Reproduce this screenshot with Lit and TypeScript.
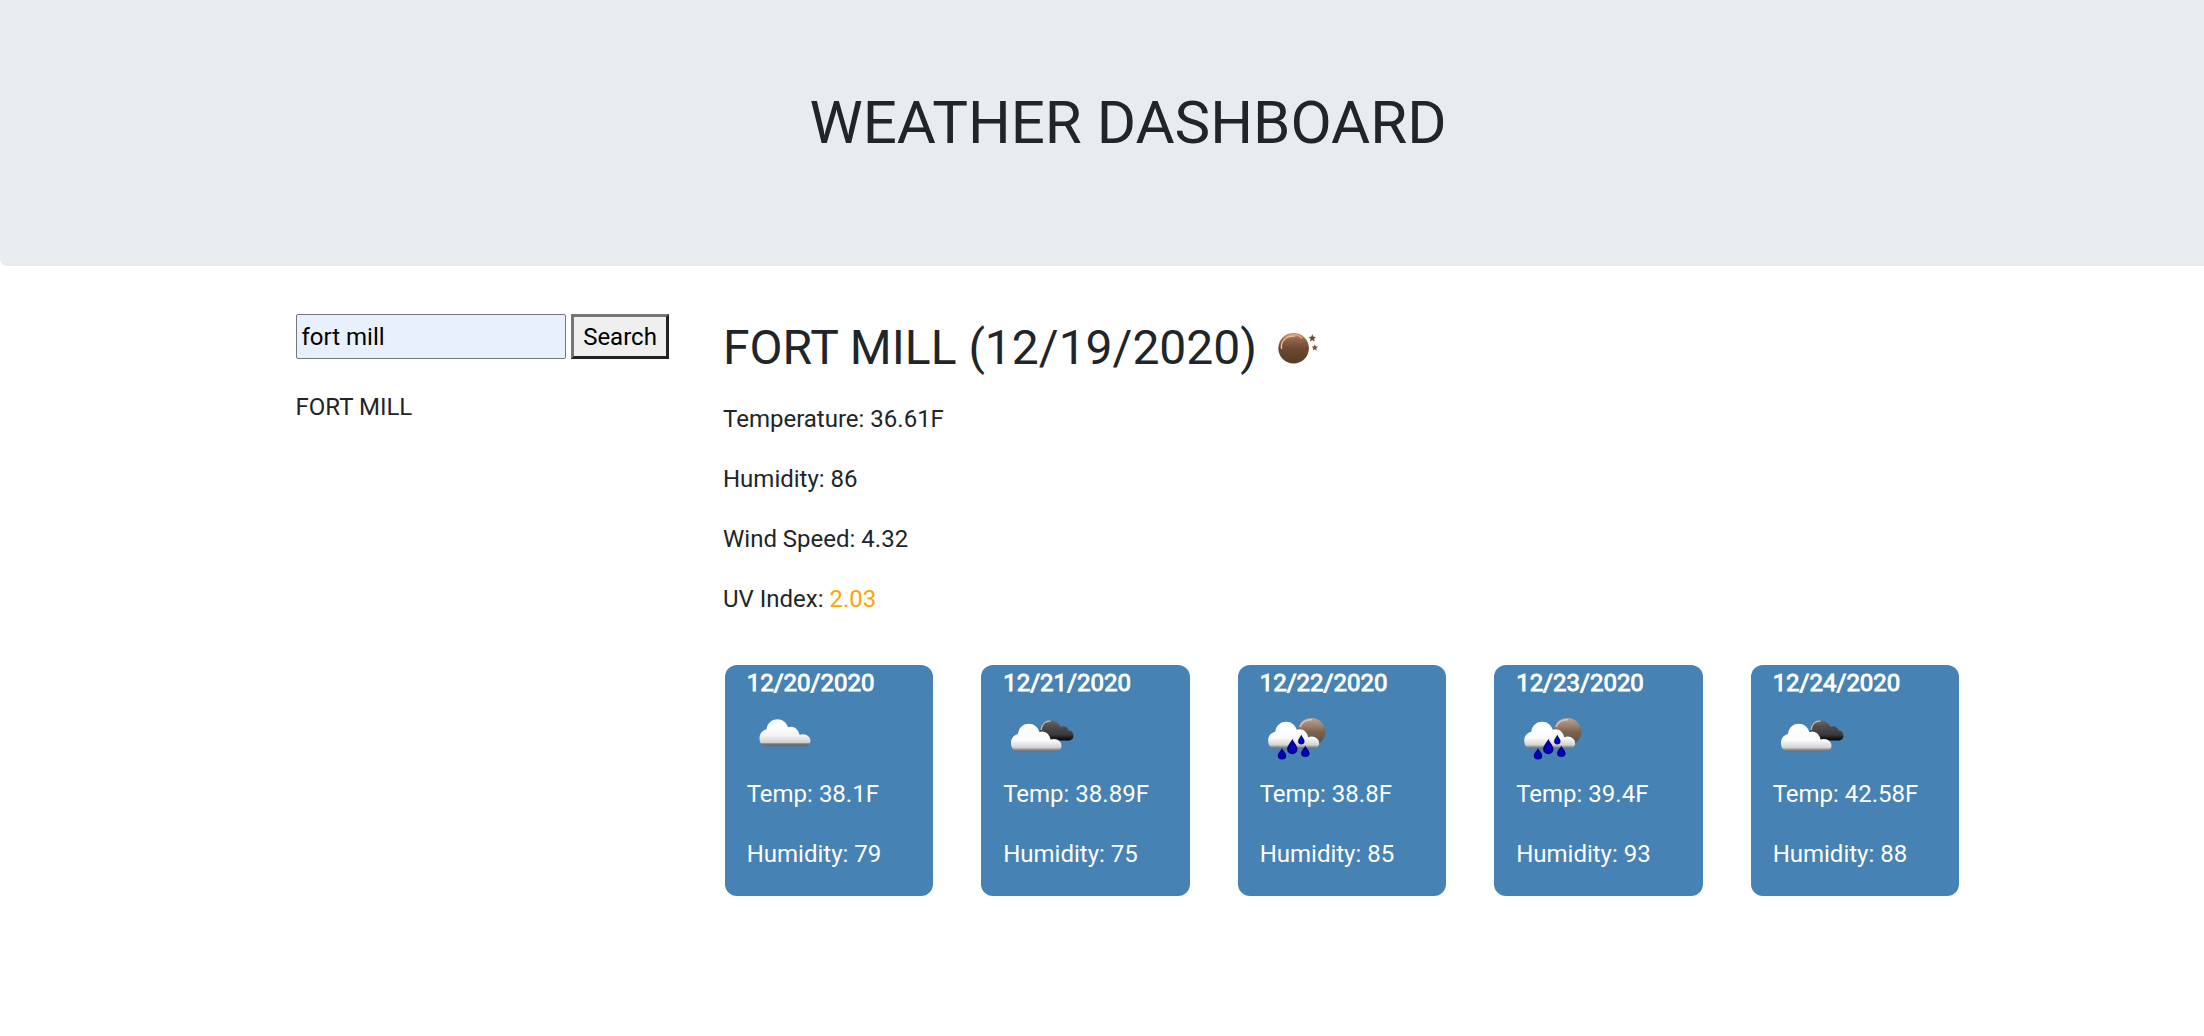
import { LitElement, html, svg, css } from "lit";
import { customElement, property } from "lit/decorators.js";

type IconName = "cloud" | "broken" | "rain" | "moon";

const CLOUD = "M7 27 C2 27 0 23 0 19 C0 14 3 11 7 10 C8 3 13 0 18 0 C23 0 27 3 28.500 8 C34 6 39 10 40 15.500 C46 13.500 51 17 51 21.500 C51 25 48 27 45 27 Z";
const DROP = "M0 -7.500 C1 -4 5 -1 5 3 A5 5 0 0 1 -5 3 C-5 -1 -1 -4 0 -7.500 Z";
const STAR = "M0 -3.400 L1 -1.100 L3.400 -1 L1.600 .7 L2.100 3.200 L0 1.900 L-2.100 3.200 L-1.600 .7 L-3.400 -1 L-1 -1.100 Z";

const gradients = svg`
  <linearGradient id="white" x1="0" y1="0" x2="0" y2="1">
    <stop offset="0" stop-color="#f4f4f4"/><stop offset=".25" stop-color="#fff"/>
    <stop offset=".6" stop-color="#f4f4f4"/><stop offset=".86" stop-color="#d0d0d0"/>
    <stop offset=".91" stop-color="#777"/><stop offset="1" stop-color="#666"/>
  </linearGradient>
  <linearGradient id="front" x1="0" y1="0" x2="0" y2="1">
    <stop offset="0" stop-color="#fff"/><stop offset=".6" stop-color="#fbfbfb"/>
    <stop offset=".86" stop-color="#d2d3d4"/><stop offset=".95" stop-color="#808488"/><stop offset="1" stop-color="#6c7074"/>
  </linearGradient>
  <linearGradient id="dark" x1="0" y1="0" x2="0" y2="1">
    <stop offset="0" stop-color="#6a6a6a"/><stop offset=".3" stop-color="#4e4e4e"/>
    <stop offset=".7" stop-color="#3a3a3a"/><stop offset="1" stop-color="#050505"/>
  </linearGradient>
  <linearGradient id="brown" x1="0" y1="0" x2="0" y2="1">
    <stop offset="0" stop-color="#c9916c"/><stop offset=".22" stop-color="#936344"/>
    <stop offset=".5" stop-color="#6c4a33"/><stop offset="1" stop-color="#573a26"/>
  </linearGradient>
  <linearGradient id="haze" x1="0" y1="0" x2="0" y2="1">
    <stop offset="0" stop-color="#b7a498"/><stop offset=".25" stop-color="#a08471"/>
    <stop offset=".5" stop-color="#7a6250"/><stop offset="1" stop-color="#5f4c41"/>
  </linearGradient>
  <radialGradient id="drop" cx=".5" cy=".6" r=".55">
    <stop offset="0" stop-color="#0505d8"/><stop offset=".5" stop-color="#0303ac"/><stop offset="1" stop-color="#020258"/>
  </radialGradient>
  <filter id="soft" x="-10%" y="-10%" width="120%" height="120%"><feGaussianBlur stdDeviation=".65"/></filter>`;

const icons = {
  cloud: {
    box: "7 -4 75 75",
    art: svg`<path d=${CLOUD} transform="translate(19.500 14.300)" fill="url(#white)"/>`,
  },
  broken: {
    box: "3.5 -4 75 75",
    art: svg`
      <path d="M43 33 C39 31 40 24 42 20 C44 16 48 15 52 15.500 C57 16 60 19 61 22 C65 20 68 22 69 25.500 C72 25 74 28 74 31 C74 34 71 35.500 69 35.500 H46 Z" fill="url(#dark)"/>
      <path d="M41.500 25 C42 19 46 16 51 16" fill="none" stroke="#b8b8b8" stroke-width="1.500"/>
      <path d=${CLOUD} transform="translate(11.500 18.800) scale(.99 1.020)" fill="url(#front)"/>`,
  },
  rain: {
    box: "5 -4 75 75",
    art: svg`
      <circle cx="56.300" cy="27" r="14" fill="url(#haze)"/>
      <path d="M45 22 C47 16.500 52 14.500 57 14.800" fill="none" stroke="#d5c4ba" stroke-width="1.600"/>
      <path d=${CLOUD} transform="translate(13.200 16.700)" fill="url(#front)"/>
      <path d=${DROP} transform="translate(37.300 41.300) scale(1.040 1)" fill="url(#drop)"/>
      <path d=${DROP} transform="translate(27 48.500) scale(.85 .75)" fill="url(#drop)"/>
      <path d=${DROP} transform="translate(50.300 46) scale(.85 .75)" fill="url(#drop)"/>
      <path d=${DROP} transform="translate(46.300 34.500) scale(.65 .62)" fill="url(#drop)"/>`,
  },
  moon: {
    box: "0 0 75 60",
    art: svg`
      <circle cx="33.600" cy="33.300" r="15.300" fill="url(#brown)"/>
      <path d="M21.500 34 C20.500 26 26 20.500 35 21" fill="none" stroke="#e5c2aa" stroke-width="1.400"/>
      <path d="M25 24 C29 18.500 38 18.500 42 23.500" fill="none" stroke="#d9a684" stroke-width="1.500"/>
      <path d=${STAR} transform="translate(52.300 23) scale(1.100)" fill="#6b4833"/>
      <path d=${STAR} transform="translate(54.800 32.500) scale(.95)" fill="#75543f"/>`,
  },
};

@customElement("weather-icon")
class WeatherIcon extends LitElement {
  @property() name: IconName = "cloud";

  static styles = css`
    :host { display: block; }
    .icon { display: block; width: 75px; height: 75px; }
    .moon { height: 60px; }
  `;

  render() {
    const { box, art } = icons[this.name];
    return html`<svg class="icon ${this.name}" viewBox=${box} aria-hidden="true">
      <defs>${gradients}</defs>
      <g filter="url(#soft)">${art}</g>
    </svg>`;
  }
}

@customElement("forecast-card")
class ForecastCard extends LitElement {
  @property() date = "";
  @property() icon: IconName = "cloud";
  @property() temp = "";
  @property() humidity = "";

  static styles = css`
    :host {
      display: block;
      box-sizing: border-box;
      width: 208.300px;
      height: 231px;
      padding-left: 21.800px;
      border-radius: 12px;
      background: steelblue;
      color: #fff;
    }
    .date {
      margin: 0;
      font-size: 24px;
      line-height: 36px;
      font-weight: 400;
      -webkit-text-stroke: .9px currentColor;
    }
    .line { margin: 0 0 24px; line-height: 36px; }
  `;

  render() {
    return html`
      <h5 class="date">${this.date}</h5>
      <weather-icon .name=${this.icon}></weather-icon>
      <p class="line">Temp: ${this.temp}F</p>
      <p class="line">Humidity: ${this.humidity}</p>
    `;
  }
}

@customElement("app-root")
class AppRoot extends LitElement {
  static styles = css`
    :host {
      display: block;
      height: 1036px;
      overflow: hidden;
      background: #fff;
      color: #212529;
      font: 400 24px/36px Roboto, sans-serif;
    }
    .banner {
      box-sizing: border-box;
      height: 266px;
      padding: 87px 0 0 52px;
      border-radius: 0 0 0 7px;
      background: #e8ecef;
      text-align: center;
    }
    .title { margin: 0; font-size: 60px; line-height: 72px; font-weight: 400; }
    .content { display: flex; padding: 48px 0 0 296px; }
    .side { width: 427px; }
    .search { display: flex; gap: 5px; height: 45px; }
    .field {
      box-sizing: border-box;
      width: 270px;
      height: 45px;
      margin: 0;
      padding: 1px 4.500px;
      border: 1px solid #767676;
      border-radius: 2px;
      background: #e8f0fe;
      color: #000;
      font: inherit;
    }
    .go {
      box-sizing: border-box;
      width: 98px;
      height: 45px;
      margin: 0;
      padding: 0;
      border: 3px solid;
      border-color: #767676 #212121 #212121 #767676;
      border-radius: 0;
      background: #efefef;
      color: #000;
      font: inherit;
    }
    .past { margin: 30px 0 0 -.5px; }
    .heading { display: flex; height: 63px; padding-top: 1px; margin-bottom: 22.500px; }
    .city { margin: 4px 3px 0 0; font-size: 48px; line-height: 57.600px; font-weight: 400; }
    .line { margin: 0 0 24px; }
    .uv { color: orange; }
    .forecast { display: flex; gap: 48.200px; padding: 24.500px 0 0 1.900px; }
  `;

  private days: { date: string; icon: IconName; temp: string; humidity: string }[] = [
    { date: "12/20/2020", icon: "cloud", temp: "38.1", humidity: "79" },
    { date: "12/21/2020", icon: "broken", temp: "38.89", humidity: "75" },
    { date: "12/22/2020", icon: "rain", temp: "38.8", humidity: "85" },
    { date: "12/23/2020", icon: "rain", temp: "39.4", humidity: "93" },
    { date: "12/24/2020", icon: "broken", temp: "42.58", humidity: "88" },
  ];

  render() {
    return html`
      <header class="banner"><h1 class="title">WEATHER DASHBOARD</h1></header>
      <main class="content">
        <aside class="side">
          <div class="search">
            <input class="field" type="text" .value=${"fort mill"} />
            <button class="go">Search</button>
          </div>
          <p class="past">FORT MILL</p>
        </aside>
        <section class="result">
          <div class="heading">
            <h2 class="city">FORT MILL (12/19/2020)</h2>
            <weather-icon .name=${"moon"}></weather-icon>
          </div>
          <p class="line">Temperature: 36.61F</p>
          <p class="line">Humidity: 86</p>
          <p class="line">Wind Speed: 4.32</p>
          <p class="line">UV Index: <span class="uv">2.03</span></p>
          <div class="forecast">
            ${this.days.map(
              (d) => html`<forecast-card .date=${d.date} .icon=${d.icon} .temp=${d.temp} .humidity=${d.humidity}></forecast-card>`
            )}
          </div>
        </section>
      </main>
    `;
  }
}
